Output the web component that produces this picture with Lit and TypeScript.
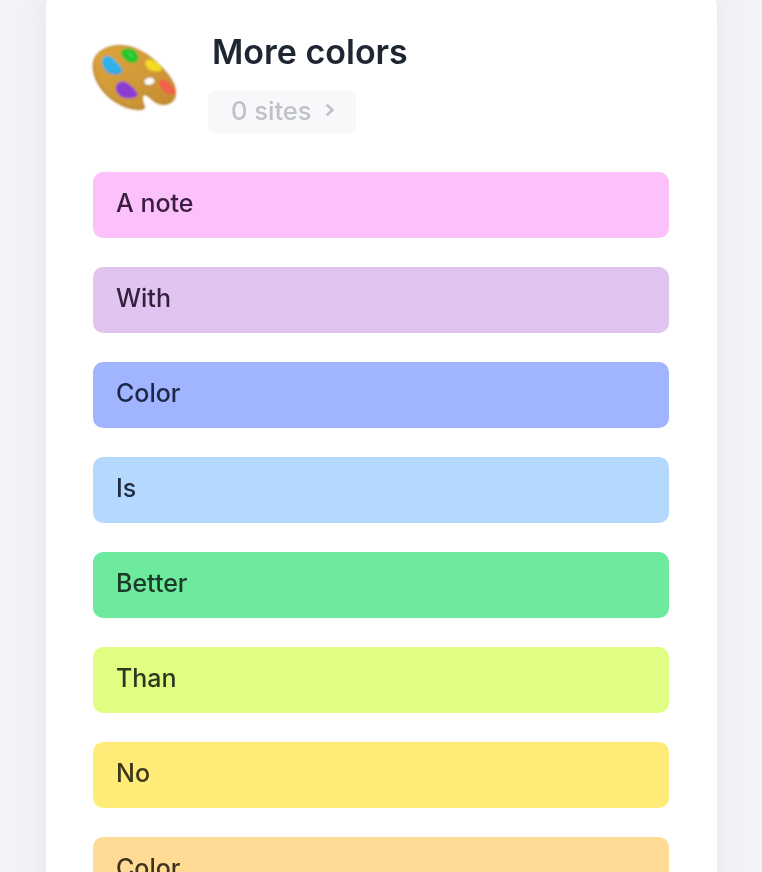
import { LitElement, html, css, svg } from "lit";
import { customElement } from "lit/decorators.js";

const NOTES: [string, string, string][] = [
  ["A note", "#fcc0fb", "#3a1d40"],
  ["With", "#dfc5ef", "#35203f"],
  ["Color", "#a0b4ff", "#1f2747"],
  ["Is", "#b5d8ff", "#212d40"],
  ["Better", "#6eea9e", "#1c3a2a"],
  ["Than", "#e0ff82", "#2f3620"],
  ["No", "#ffeb78", "#3d3718"],
  ["Color", "#ffdb95", "#3f3320"],
];

const palette = svg`
  <defs>
    <filter id="soft" x="-10%" y="-10%" width="120%" height="120%"><feGaussianBlur stdDeviation="2.4"/></filter>
    <linearGradient id="wood" x1="0" y1="0" x2="1" y2="1">
      <stop offset="0" stop-color="#dfa43a"/>
      <stop offset="0.5" stop-color="#d29a38"/>
      <stop offset="1" stop-color="#c48c30"/>
    </linearGradient>
  </defs>
  <g filter="url(#soft)">
    <path fill="#bd8a35" d="M72 115C85 90 110 78 145 75C190 72 235 100 270 135C300 165 322 195 318 225C315 250 285 262 260 250C245 243 235 225 222 225C215 228 220 250 226 262C222 272 205 272 185 268C140 258 95 225 75 175C68 155 65 135 72 115Z"/>
    <path fill="url(#wood)" d="M76 115C88 93 112 82 145 79C188 76 232 103 267 138C296 167 316 195 313 222C310 242 284 252 262 243C248 236 238 218 222 218C209 222 214 245 218 258C212 264 200 263 185 260C142 250 100 220 81 172C74 153 71 134 76 115Z"/>
    <ellipse cx="238" cy="185" rx="20" ry="15" fill="#b4802e" transform="rotate(-8 238 185)"/>
    <ellipse cx="238" cy="184" rx="16" ry="11" fill="#fdfaf2" transform="rotate(-8 238 184)"/>
    <path fill="#2fb2e8" d="M98 115C108 103 125 108 136 123C146 133 160 145 157 156C146 167 120 167 106 151C98 141 93 125 98 115Z"/>
    <path fill="#3f97d8" d="M108 148C120 158 140 160 155 152C155 158 148 162 136 162C122 162 114 156 108 148Z"/>
    <path fill="#22c52a" d="M153 95C158 83 180 83 191 90C202 97 208 110 204 121C196 132 180 130 169 122C159 114 151 105 153 95Z"/>
    <path fill="#3ed445" d="M168 96C178 92 190 102 192 114C184 114 174 106 168 96Z"/>
    <path fill="#f4dc22" d="M226 125C233 114 245 118 256 125C267 132 277 142 274 151C263 158 245 154 234 147C229 139 224 132 226 125Z"/>
    <path fill="#8b3cd2" d="M138 200C143 183 160 181 173 190C184 198 197 209 204 225C196 237 170 237 154 230C144 222 135 212 138 200Z"/>
    <path fill="#f2604c" d="M267 185C274 175 286 178 296 188C306 198 318 208 317 217C311 227 295 224 284 217C274 206 265 195 267 185Z"/>
  </g>
`;

@customElement("app-root")
export class AppRoot extends LitElement {
  static styles = css`
    :host {
      display: block;
      height: 872px;
      overflow: hidden;
      background: #f2f3f6;
      font-family: Inter, "Liberation Sans", sans-serif;
    }
    .card {
      box-sizing: border-box;
      width: 671px;
      height: 1000px;
      margin: 0 0 0 46px;
      transform: translateY(-16px);
      padding: 48px 48px 0 47px;
      background: #ffffff;
      border-radius: 24px;
      box-shadow: 0 0 24px rgba(170, 176, 190, 0.16);
      filter: blur(0.4px);
    }
    .header {
      display: flex;
      align-items: flex-start;
      height: 106px;
      margin-bottom: 34px;
    }
    .logo {
      display: block;
      width: 130px;
      height: 110px;
      flex: none;
      margin: -12px 0 -12px -23px;
    }
    .meta {
      display: flex;
      flex-direction: column;
      align-items: flex-start;
      margin-left: 8px;
    }
    h1 {
      margin: 0 0 18px 4px;
      font-size: 34px;
      line-height: 40px;
      font-weight: 600;
      color: #1f2633;
    }
    .sites {
      display: flex;
      align-items: center;
      gap: 12px;
      box-sizing: border-box;
      width: 148px;
      height: 43px;
      padding: 0 0 3px 23px;
      border-radius: 8px;
      background: #f7f8fa;
      color: #bfc1c5;
      font-size: 25.5px;
      font-weight: 500;
    }
    .sites svg {
      width: 12px;
      height: 14px;
      flex: none;
    }
    .notes {
      display: flex;
      flex-direction: column;
      gap: 29.5px;
    }
    .note {
      box-sizing: border-box;
      height: 65.5px;
      padding: 14px 23px 0;
      border-radius: 10px;
      font-size: 25px;
      font-weight: 450;
      line-height: 34px;
    }
  `;

  render() {
    return html`
      <div class="card">
        <div class="header">
          <svg class="logo" viewBox="0 0 390 330" aria-hidden="true">${palette}</svg>
          <div class="meta">
            <h1>More colors</h1>
            <div class="sites">
              <span>0 sites</span>
              <svg viewBox="0 0 12 14" fill="none" stroke="#bfc1c5" stroke-width="2.6" stroke-linecap="round" stroke-linejoin="round">
                <path d="M3.5 2.5 8.5 7 3.5 11.5" />
              </svg>
            </div>
          </div>
        </div>
        <div class="notes">
          ${NOTES.map(
            ([text, bg, fg]) =>
              html`<div class="note" style="background:${bg};color:${fg}">${text}</div>`
          )}
        </div>
      </div>
    `;
  }
}
